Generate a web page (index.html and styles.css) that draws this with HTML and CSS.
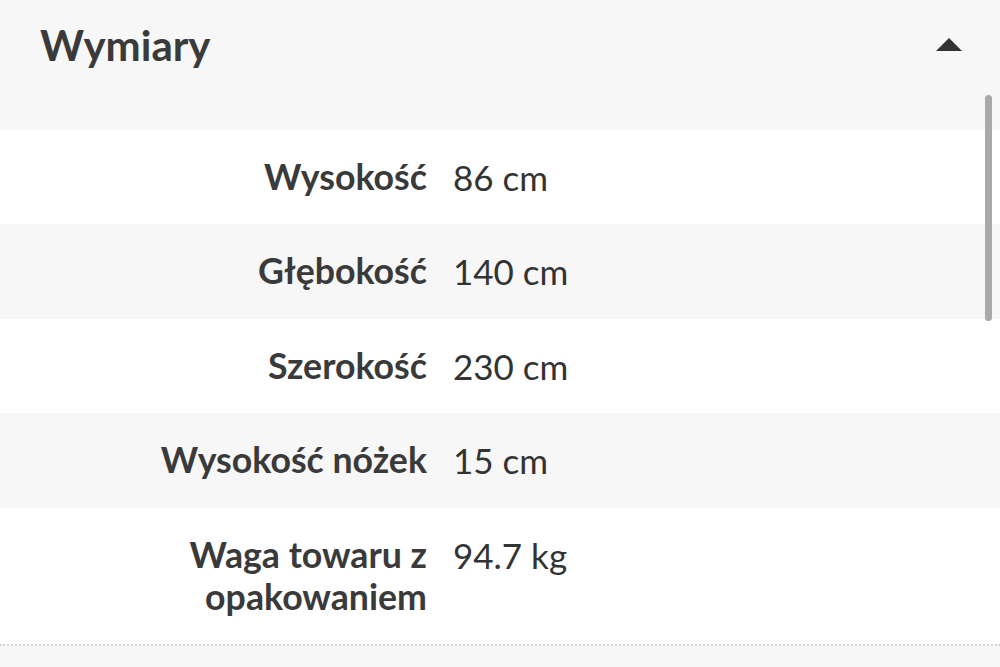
FILE: index.html
```html
<!DOCTYPE html>
<html lang="pl">
<head>
<meta charset="utf-8">
<link rel="stylesheet" href="styles.css">
</head>
<body>
<section class="panel">
  <header class="panel-head">
    <h2 class="title">Wymiary</h2>
    <span class="toggle"></span>
  </header>
  <div class="rows">
    <div class="row"><div class="label">Wysokość</div><div class="value">86 cm</div></div>
    <div class="row alt"><div class="label">Głębokość</div><div class="value">140 cm</div></div>
    <div class="row"><div class="label">Szerokość</div><div class="value">230 cm</div></div>
    <div class="row alt"><div class="label">Wysokość nóżek</div><div class="value">15 cm</div></div>
    <div class="row last"><div class="label">Waga towaru z<br>opakowaniem</div><div class="value">94.7 kg</div></div>
  </div>
  <div class="scrollbar"></div>
</section>
</body>
</html>
```
FILE: styles.css
```css
html, body {
  margin: 0;
  padding: 0;
  background: #f7f7f7;
  font-family: Lato, "Open Sans", sans-serif;
  color: #333;
}
.panel {
  position: relative;
  width: 1000px;
  height: 667px;
  overflow: hidden;
}
.panel-head {
  height: 130px;
  display: flex;
  justify-content: space-between;
  align-items: flex-start;
  padding: 0 38px 0 40px;
  box-sizing: border-box;
}
.title {
  margin: 19px 0 0;
  font-size: 42px;
  font-weight: 700;
  line-height: 52px;
  color: #3a3a3a;
}
.toggle {
  margin-top: 38px;
  width: 0;
  height: 0;
  border-left: 13px solid transparent;
  border-right: 13px solid transparent;
  border-bottom: 13px solid #333;
}
.row {
  display: grid;
  grid-template-columns: 427px 1fr;
  column-gap: 26px;
  padding: 26px 0;
  background: #fff;
  font-size: 35px;
  line-height: 42px;
  height: 94px;
  box-sizing: border-box;
}
.row.alt { background: #f7f7f7; height: 95px; }
.row.last {
  height: auto;
  padding-bottom: 26px;
  border-bottom: 2px dotted #d2d2d2;
}
.label {
  text-align: right;
  font-weight: 700;
  font-size: 35.7px;
  color: #3a3a3a;
}
.value {
  font-weight: 400;
  color: #333;
}
.scrollbar {
  position: absolute;
  left: 985px;
  top: 95px;
  width: 7px;
  height: 226px;
  border-radius: 4px;
  background: #a9a9a9;
}
```
